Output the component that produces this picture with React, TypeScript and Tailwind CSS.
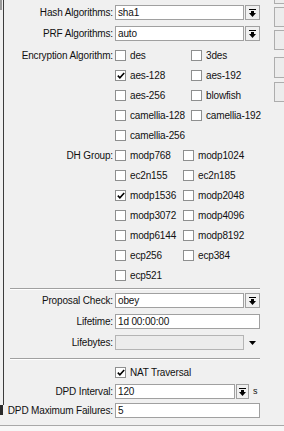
import React from 'react';

const encryption: [string, boolean][][] = [
  [['des', false], ['3des', false]],
  [['aes-128', true], ['aes-192', false]],
  [['aes-256', false], ['blowfish', false]],
  [['camellia-128', false], ['camellia-192', false]],
  [['camellia-256', false]],
];

const dhGroups: [string, boolean][][] = [
  [['modp768', false], ['modp1024', false]],
  [['ec2n155', false], ['ec2n185', false]],
  [['modp1536', true], ['modp2048', false]],
  [['modp3072', false], ['modp4096', false]],
  [['modp6144', false], ['modp8192', false]],
  [['ecp256', false], ['ecp384', false]],
  [['ecp521', false]],
];

function Label({ text }: { text: string }) {
  return <div className="w-[111px] shrink-0 pr-[2px] text-right whitespace-nowrap">{text}</div>;
}

function Box({ checked }: { checked: boolean }) {
  return (
    <div className="flex h-[11px] w-[11px] shrink-0 items-center justify-center border border-[#8e8f8f] bg-white">
      {checked && (
        <svg width="8" height="7" viewBox="0 0 8 7">
          <path d="M0.8 3.6 L2.9 5.8 L7.2 1" stroke="#000" strokeWidth="1.6" fill="none" />
        </svg>
      )}
    </div>
  );
}

function Check({ text, checked }: { text: string; checked: boolean }) {
  return (
    <div className="flex h-[20px] items-center gap-[4px] whitespace-nowrap">
      <Box checked={checked} />
      <span>{text}</span>
    </div>
  );
}

function DropBtn({ narrow }: { narrow?: boolean }) {
  return (
    <div
      className={`ml-[1px] flex h-[15px] ${
        narrow ? 'w-[13px]' : 'w-[15px]'
      } shrink-0 items-center justify-center border border-[#a0a0a0] bg-[#f0f0f0]`}
    >
      <svg width="7" height="8" viewBox="0 0 7 8">
        <rect x="0" y="0" width="7" height="1" fill="#000" />
        <rect x="2" y="2" width="3" height="2" fill="#000" />
        <polygon points="0,4 7,4 3.5,8" fill="#000" />
      </svg>
    </div>
  );
}

function Input({ value, width, disabled }: { value: string; width: string; disabled?: boolean }) {
  return (
    <div
      className={`${width} h-[15px] shrink-0 border px-[2px] leading-[13px] whitespace-nowrap ${
        disabled ? 'border-[#b4b4b4] bg-[#ececec]' : 'border-[#a0a0a0] bg-white'
      }`}
    >
      {value}
    </div>
  );
}

function Separator() {
  return <div className="ml-[6px] h-[2px] w-[250px] border-t border-b border-t-[#a0a0a0] border-b-white" />;
}

function CheckSection({ label, rows, col }: { label: string; rows: [string, boolean][][]; col: string }) {
  return (
    <div className="flex">
      <div className="flex h-[20px] items-center">
        <Label text={label} />
      </div>
      <div className={`grid ${col} auto-rows-[20px]`}>
        {rows.flatMap((r) => r.map(([t, c]) => <Check key={t} text={t} checked={c} />))}
      </div>
    </div>
  );
}

export default function App() {
  return (
    <div className="h-[431px] w-[284px] overflow-hidden bg-[#f0f0f0] font-['Liberation_Sans',Arial,sans-serif] text-[10px] tracking-[-0.15px] text-[#111]">
      <div className="flex h-[425px]">
        {/* left edge */}
        <div className="flex w-[3px] shrink-0 flex-col">
          <div className="h-[10px] w-[2px] bg-[#9a9a9a]" />
          <div className="mt-[395px] h-[10px] w-[3px] bg-[#2a2a2a]" />
        </div>
        <div className="h-[405px] w-[1px] shrink-0 bg-[#3c3c3c]" />

        {/* form */}
        <div className="flex w-[270px] shrink-0 flex-col pt-[5px]">
          <div className="flex h-[15px] items-center">
            <Label text="Hash Algorithms:" />
            <Input value="sha1" width="w-[129px]" />
            <DropBtn />
          </div>
          <div className="mt-[6px] flex h-[15px] items-center">
            <Label text="PRF Algorithms:" />
            <Input value="auto" width="w-[129px]" />
            <DropBtn />
          </div>

          <div className="mt-[4px]">
            <CheckSection label="Encryption Algorithm:" rows={encryption} col="grid-cols-[76px_auto]" />
            <CheckSection label="DH Group:" rows={dhGroups} col="grid-cols-[68px_auto]" />
          </div>

          <div className="mt-[3px]">
            <Separator />
          </div>

          <div className="mt-[3px] flex h-[15px] items-center">
            <Label text="Proposal Check:" />
            <Input value="obey" width="w-[129px]" />
            <DropBtn />
          </div>
          <div className="mt-[6px] flex h-[15px] items-center">
            <Label text="Lifetime:" />
            <Input value="1d 00:00:00" width="w-[145px]" />
          </div>
          <div className="mt-[6px] flex h-[15px] items-center">
            <Label text="Lifebytes:" />
            <Input value="" width="w-[129px]" disabled />
            <svg className="ml-[5px]" width="7" height="4" viewBox="0 0 7 4">
              <polygon points="0,0 7,0 3.5,4" fill="#000" />
            </svg>
          </div>

          <div className="mt-[8px]">
            <Separator />
          </div>

          <div className="mt-[2px] flex h-[20px] items-center">
            <Label text="" />
            <Check text="NAT Traversal" checked />
          </div>
          <div className="mt-[2px] flex h-[15px] items-center">
            <Label text="DPD Interval:" />
            <Input value="120" width="w-[120px]" />
            <DropBtn narrow />
            <span className="ml-[4px] text-[9px]">s</span>
          </div>
          <div className="mt-[4px] flex h-[15px] items-center">
            <Label text="DPD Maximum Failures:" />
            <Input value="5" width="w-[145px]" />
          </div>
        </div>

        {/* right buttons, cut off */}
        <div className="flex w-[10px] shrink-0 flex-col overflow-hidden">
          <div className="h-[4px] w-[20px] border-x border-b border-[#adadad] bg-[#ececec]" />
          <div className="mt-[3px] h-[20px] w-[20px] border border-[#adadad] bg-[#ececec]" />
          <div className="mt-[3px] h-[20px] w-[20px] border border-[#adadad] bg-[#ececec]" />
          <div className="mt-[7px] h-[21px] w-[20px] border border-[#adadad] bg-[#ececec]" />
          <div className="mt-[4px] h-[20px] w-[20px] border border-[#adadad] bg-[#ececec]" />
        </div>
      </div>
      <div className="h-[1px] w-full bg-[#a8a8a8]" />
      <div className="h-[5px] w-full bg-[#f7f7f7]" />
    </div>
  );
}
